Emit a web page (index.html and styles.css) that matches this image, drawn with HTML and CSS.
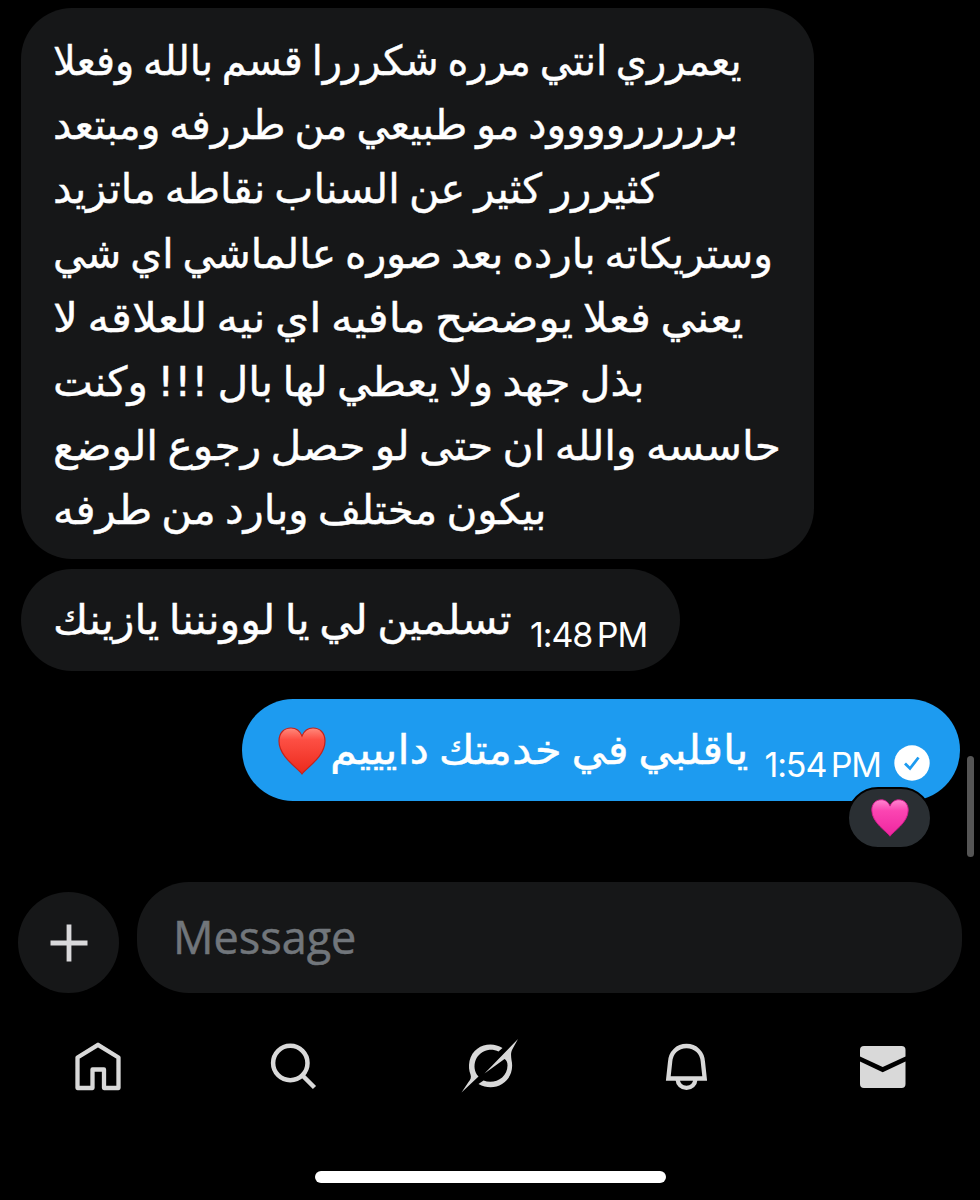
FILE: index.html
```html
<!DOCTYPE html>
<html lang="ar">
<head>
  <meta charset="UTF-8">
  <meta name="viewport" content="width=device-width, initial-scale=1.0">
  <title>Messages</title>
  <link rel="stylesheet" href="styles.css">
</head>
<body>
  <main class="chat">
    <div class="bubble received long">
      <p class="text" dir="rtl">
        <span class="line l1">يعمرري انتي مرره شكرررا قسم بالله وفعلا</span>
        <span class="line l2">بررررروووود مو طبيعي من طررفه ومبتعد</span>
        <span class="line l3">كثيررر كثير عن السناب نقاطه ماتزيد</span>
        <span class="line l4">وستريكاته بارده بعد صوره عالماشي اي شي</span>
        <span class="line l5">يعني فعلا يوضضح مافيه اي نيه للعلاقه لا</span>
        <span class="line l6">بذل جهد ولا يعطي لها بال !!! وكنت</span>
        <span class="line l7">حاسسه والله ان حتى لو حصل رجوع الوضع</span>
        <span class="line l8">بيكون مختلف وبارد من طرفه</span>
      </p>
    </div>

    <div class="bubble received short">
      <p class="text" dir="rtl"><span class="line l9">تسلمين لي يا لوونننا يازينك</span></p>
      <span class="time">1:48 PM</span>
    </div>

    <div class="bubble sent">
      <svg class="heart" viewBox="0 0 48 48">
        <defs>
          <linearGradient id="red" x1="0" y1="0" x2="0" y2="1">
            <stop offset="0" stop-color="#ff8a7c"/>
            <stop offset=".25" stop-color="#fd4f44"/>
            <stop offset="1" stop-color="#ec2a1c"/>
          </linearGradient>
        </defs>
        <path d="M24 47C20 41 1 30 1 14C1 6 6 1 13 1C18 1 22 4 24 9C26 4 30 1 35 1C42 1 47 6 47 14C47 30 28 41 24 47Z" fill="url(#red)" stroke="#c3231c" stroke-width="1.2"/>
      </svg>
      <p class="text" dir="rtl"><span class="line l10">ياقلبي في خدمتك دايييم</span></p>
      <span class="time">1:54 PM</span>
      <svg class="check" viewBox="0 0 36 36">
        <circle cx="18" cy="18" r="17.7" fill="#fff"/>
        <path d="M11 18.5L16 23.5L24.5 12.5" fill="none" stroke="#1d9bf0" stroke-width="2.8"/>
      </svg>
      <div class="reaction">
        <svg viewBox="0 0 48 48">
          <defs>
            <linearGradient id="pink" x1="0" y1="0" x2="0" y2="1">
              <stop offset="0" stop-color="#ff86d0"/>
              <stop offset=".3" stop-color="#fb45b2"/>
              <stop offset="1" stop-color="#ee259f"/>
            </linearGradient>
          </defs>
          <path d="M24 47C20 41 1 30 1 14C1 6 6 1 13 1C18 1 22 4 24 9C26 4 30 1 35 1C42 1 47 6 47 14C47 30 28 41 24 47Z" fill="url(#pink)" stroke="#d4188d" stroke-width="1.2"/>
        </svg>
      </div>
    </div>
  </main>
  <div class="scrollbar"></div>

  <div class="composer">
    <button class="add" aria-label="Add">
      <svg viewBox="0 0 38 38"><path d="M19 0.5V37.5M0.5 19H37.5" stroke="#d9d9db" stroke-width="4.8"/></svg>
    </button>
    <div class="input"><span>Message</span></div>
  </div>

  <nav class="tabs">
    <svg viewBox="0 0 60 60">
      <path d="M9.500 17.500L30 4.800L50.500 17.500V48H36V29.500H24.500V48H9.500Z" fill="none" stroke="#d9d9d9" stroke-width="4.300" stroke-linejoin="round"/>
    </svg>
    <svg viewBox="0 0 60 60">
      <circle cx="26.3" cy="23" r="17.2" fill="none" stroke="#d9d9d9" stroke-width="4.5"/>
      <path d="M38.5 35.5L50.5 47.5" stroke="#d9d9d9" stroke-width="4.5"/>
    </svg>
    <svg viewBox="0 0 60 60" fill="#d9d9d9">
      <path d="M42.500 8C31 0.500 13 5 9.500 21C8.500 26 9 31 10.500 34.500C11.500 37.500 10.500 39.500 8.500 42L1.500 52.500L18.500 36.500C10 27 16 11 29.500 9.700C33 9.500 36 10.200 38.500 11.500Z"/>
      <path d="M24.500 33.500L58 -1L52.500 9C50.500 13 51 15.500 51.500 20C56 40 36 54 18.500 44L23.500 40.500C34 45 47.500 38 47.500 25.500C47.500 22.500 46.500 20 44.500 19Z"/>
    </svg>
    <svg viewBox="0 0 60 60" fill="none" stroke="#d9d9d9" stroke-width="4.3">
      <path d="M12.300 38.500L14.100 22C14.500 12.500 21.500 6 30.500 6S46.500 12.500 46.900 22L48.700 38.500Z"/>
      <path d="M21.500 39C22 44.500 25.500 47.800 30.500 47.800S39 44.500 39.500 39"/>
    </svg>
    <svg viewBox="0 0 60 60" fill="#d9d9d9">
      <path d="M8 16.500V10Q8 6 12 6H49.500Q53.500 6 53.500 10V16.500L30.700 27Z"/>
      <path d="M8 21.500L30.700 32.300L53.500 21.500V44Q53.500 48 49.500 48H12Q8 48 8 44Z"/>
    </svg>
  </nav>
  <div class="home-indicator"></div>
</body>
</html>
```
FILE: styles.css
```css
* {
  box-sizing: border-box;
}
body {
  margin: 0;
  height: 1200px;
  background: #000;
  color: #fff;
  font-family: Inter, "Noto Sans", sans-serif;
  overflow: hidden;
  display: flex;
  flex-direction: column;
}
svg {
  display: block;
  overflow: visible;
}
.chat {
  display: flex;
  flex-direction: column;
  align-items: flex-start;
  height: 882px;
  padding: 8px 20px 0 21px;
}
.bubble {
  display: flex;
  position: relative;
  background: #161718;
  border-radius: 51px;
  padding: 0 33px 0 32px;
}
.long {
  width: 793px;
  height: 551px;
  padding-top: 20px;
}
.short {
  width: 659px;
  height: 102px;
  margin-top: 10px;
  padding-top: 18px;
}
.sent {
  width: 718px;
  height: 102px;
  margin-top: 28px;
  padding: 18px 30px 0 36px;
  align-self: flex-end;
  background: #1d9bf0;
}
.text {
  margin: 0;
  padding-top: 1px;
  text-align: left;
  font-family: "DejaVu Sans", sans-serif;
  font-size: 41px;
  line-height: 64.2px;
  word-spacing: -4px;
  white-space: nowrap;
  -webkit-text-stroke: 0.4px #fff;
}
.line {
  display: block;
  transform-origin: left;
}
.l1 { transform: scaleX(0.972); }
.l2 { transform: scaleX(0.996); }
.l3 { transform: scaleX(1.012); }
.l4 { transform: scaleX(0.996); }
.l5 { transform: scaleX(1.067); }
.l6 { transform: scaleX(1.033); }
.l7 { transform: scaleX(1.033); }
.l8 { transform: scaleX(1.023); }
.l9 { transform: scaleX(1.043); }
.l10 { transform: scaleX(1.064); }
.time {
  margin-left: auto;
  padding-top: 27px;
  font-size: 34px;
  line-height: 42px;
  letter-spacing: -1.1px;
  word-spacing: -4px;
  white-space: nowrap;
}
.heart {
  width: 48px;
  height: 48px;
  margin: 10px 4px 0 0;
  flex: none;
}
.check {
  width: 36px;
  height: 36px;
  margin: 28px 0 0 13px;
  flex: none;
}
.reaction {
  position: absolute;
  right: 28px;
  top: 88px;
  width: 85px;
  height: 62px;
  border: 2px solid #000;
  border-radius: 31px;
  background: #2a2f33;
  display: flex;
  align-items: center;
  justify-content: center;
}
.reaction svg {
  width: 38px;
  height: 38px;
}
.scrollbar {
  position: absolute;
  left: 967px;
  top: 756px;
  width: 7px;
  height: 101px;
  border-radius: 4px;
  background: #555;
}
.composer {
  display: flex;
  align-items: flex-end;
  gap: 18px;
  padding: 0 18px;
  height: 111px;
}
.add {
  width: 101px;
  height: 101px;
  border: 0;
  padding: 0;
  border-radius: 50%;
  background: #161718;
  display: flex;
  align-items: center;
  justify-content: center;
}
.add svg {
  width: 38px;
  height: 38px;
}
.input {
  flex: 1;
  height: 111px;
  padding-left: 36px;
  border-radius: 52px;
  background: #161718;
  color: #71767b;
  font-family: "Open Sans", sans-serif;
  font-size: 45px;
  line-height: 110px;
  -webkit-text-stroke: 0.5px #71767b;
}
.tabs {
  display: flex;
  justify-content: space-around;
  height: 60px;
  margin-top: 47px;
}
.tabs svg {
  width: 60px;
  height: 60px;
}
.home-indicator {
  width: 351px;
  height: 12px;
  margin: 71px auto 0;
  border-radius: 6px;
  background: #fff;
}
```
